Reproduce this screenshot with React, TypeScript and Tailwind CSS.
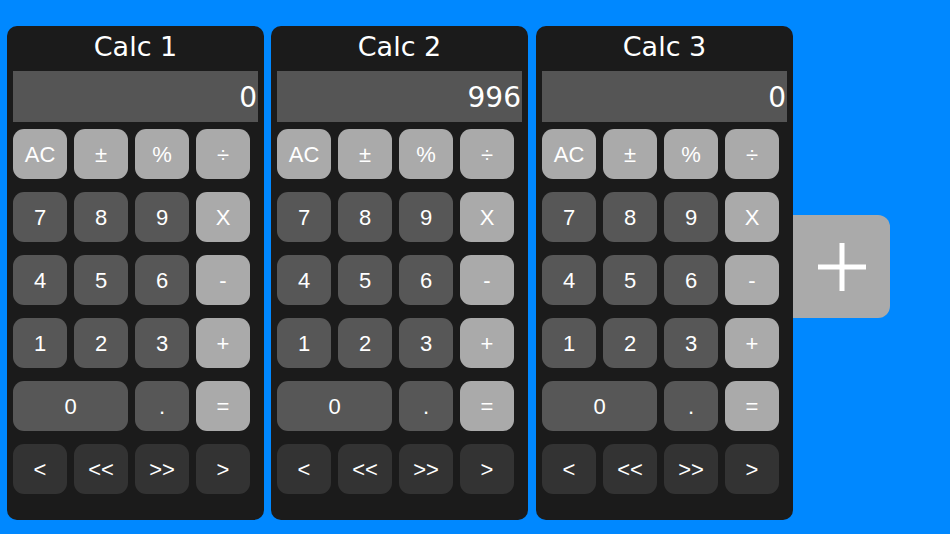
import React from 'react';

type Key = { label: string; kind: 'op' | 'num' | 'nav'; wide?: boolean };

const keys: Key[] = [
  { label: 'AC', kind: 'op' },
  { label: '±', kind: 'op' },
  { label: '%', kind: 'op' },
  { label: '÷', kind: 'op' },
  { label: '7', kind: 'num' },
  { label: '8', kind: 'num' },
  { label: '9', kind: 'num' },
  { label: 'X', kind: 'op' },
  { label: '4', kind: 'num' },
  { label: '5', kind: 'num' },
  { label: '6', kind: 'num' },
  { label: '-', kind: 'op' },
  { label: '1', kind: 'num' },
  { label: '2', kind: 'num' },
  { label: '3', kind: 'num' },
  { label: '+', kind: 'op' },
  { label: '0', kind: 'num', wide: true },
  { label: '.', kind: 'num' },
  { label: '=', kind: 'op' },
  { label: '<', kind: 'nav' },
  { label: '<<', kind: 'nav' },
  { label: '>>', kind: 'nav' },
  { label: '>', kind: 'nav' },
];

const kindClass = {
  op: 'bg-[#aaaaaa]',
  num: 'bg-[#575757]',
  nav: 'bg-[#333333]',
};

function Calculator({ title, value }: { title: string; value: string }) {
  return (
    <div className="w-[257px] h-[494px] rounded-[10px] bg-[#1b1b1b] flex flex-col">
      <div className="h-[45px] flex items-center justify-center pb-[2px] text-white text-[27px] font-['DejaVu_Sans',sans-serif]">
        {title}
      </div>
      <div className="ml-[6px] w-[245px] h-[51px] bg-[#555555] flex items-center justify-end pr-[1px] pt-[2px] text-white text-[28px] font-['DejaVu_Sans',sans-serif]">
        {value}
      </div>
      <div className="ml-[6px] mt-[7px] grid grid-cols-[repeat(4,54px)] auto-rows-[50px] gap-x-[7px] gap-y-[13px]">
        {keys.map((k) => (
          <button
            key={k.label}
            className={`${kindClass[k.kind]} ${k.wide ? 'col-span-2' : ''} rounded-[11px] flex items-center justify-center pt-[1px] text-white text-[22px] font-['Liberation_Sans',Arial,sans-serif]`}
          >
            {k.label}
          </button>
        ))}
      </div>
    </div>
  );
}

export default function App() {
  return (
    <div className="w-[950px] h-[534px] bg-[#0088ff] flex items-start pt-[26px] pl-[7px] overflow-hidden">
      <div className="flex gap-[7px]">
        <Calculator title="Calc 1" value="0" />
        <Calculator title="Calc 2" value="996" />
        <div className="ml-[1px]">
          <Calculator title="Calc 3" value="0" />
        </div>
      </div>
      <button className="mt-[189px] w-[97px] h-[103px] bg-[#aaaaaa] rounded-r-[12px] flex items-center justify-center">
        <svg width="48" height="48" viewBox="0 0 48 48">
          <rect x="0" y="21.5" width="48" height="5" fill="#ffffff" />
          <rect x="21.5" y="0" width="5" height="48" fill="#ffffff" />
        </svg>
      </button>
    </div>
  );
}
